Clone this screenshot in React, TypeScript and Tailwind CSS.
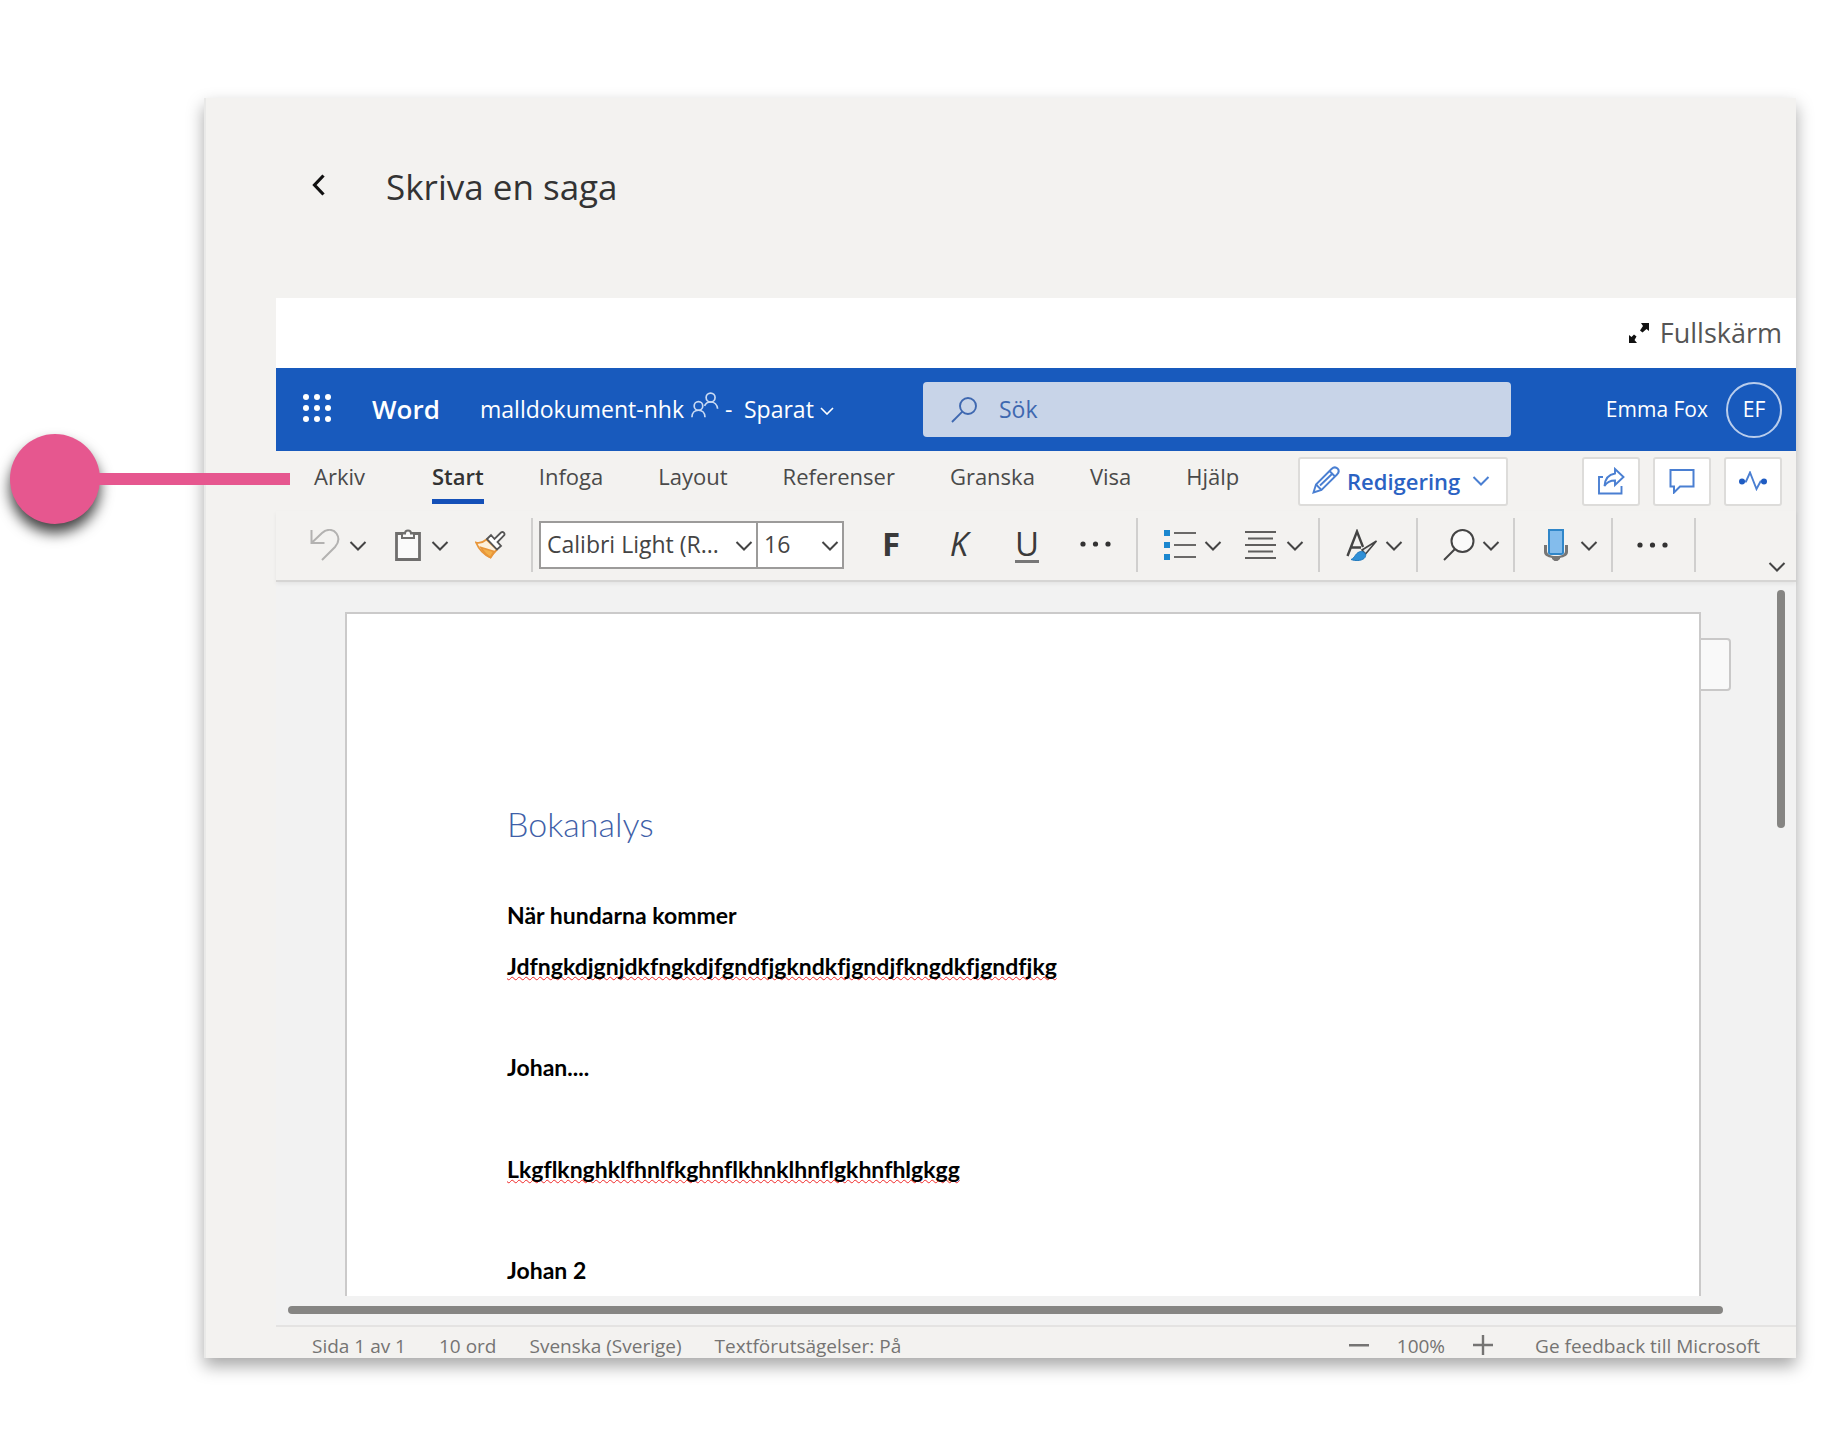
import { useState } from 'react'
import type { ReactNode } from 'react'

const tabs = ['Arkiv', 'Start', 'Infoga', 'Layout', 'Referenser', 'Granska', 'Visa', 'Hjälp']

function Chevron({ className = '' }: { className?: string }) {
  return (
    <svg className={`w-[18px] h-[10px] shrink-0 ${className}`} viewBox="0 0 18 10" fill="none" stroke="currentColor" strokeWidth="2">
      <path d="M1.500 1L9 8.500L16.500 1" />
    </svg>
  )
}

function Dots() {
  return (
    <svg className="w-[31px] h-[6px]" viewBox="0 0 31 6" fill="#333333">
      <circle cx="3" cy="3" r="2.600" />
      <circle cx="15.500" cy="3" r="2.600" />
      <circle cx="28" cy="3" r="2.600" />
    </svg>
  )
}

function Separator() {
  return <div className="w-[2px] h-[54px] bg-[#d0cfce] shrink-0" />
}

function ToolButton({ label, menu, className = '', children }: { label: string; menu?: boolean; className?: string; children: ReactNode }) {
  return (
    <button aria-label={label} className={`flex items-center shrink-0 text-[#444444] ${className}`}>
      {children}
      {menu && <Chevron className="mt-[2px]" />}
    </button>
  )
}

function TopButton({ label, children }: { label: string; children: ReactNode }) {
  return (
    <button
      aria-label={label}
      className="w-[58px] h-[49px] flex items-center justify-center bg-white border-2 border-[#dddcda] rounded-[3px] text-[#4a7fd2]"
    >
      {children}
    </button>
  )
}

function WordHeader() {
  return (
    <header className="flex items-center h-[83px] bg-[#185abd] text-white">
      <div className="flex items-center w-[647px] shrink-0 pl-[27px]">
        <button aria-label="Startprogram för appar" className="mb-1">
          <svg className="w-[28px] h-[28px]" viewBox="0 0 28 28" fill="currentColor">
            {[3, 14, 25].map((y) => [3, 14, 25].map((x) => <circle key={`${x}-${y}`} cx={x} cy={y} r="3" />))}
          </svg>
        </button>
        <span className="ml-[41px] w-[108px] text-[26px] font-semibold">Word</span>
        <span className="w-[211px] text-[23px] whitespace-nowrap">malldokument-nhk</span>
        <svg className="w-[28px] h-[28px] mb-[10px]" viewBox="0 0 30 28" fill="none" stroke="#c9daf3" strokeWidth="1.800">
          <circle cx="8" cy="15" r="4.600" />
          <path d="M1 27c0-4.500 3-7.400 7-7.400s7 2.900 7 7.400" />
          <circle cx="21" cy="6" r="4.800" />
          <path d="M14.500 15c1.200-2.700 3.600-4.200 6.500-4.200c4 0 7 3 7.500 7.200" />
        </svg>
        <button className="flex items-center ml-[6px] text-[23px]">
          <span className="w-[19px] text-left">-</span>
          Sparat
          <svg className="w-[14px] h-[8px] ml-[6px] mt-[2px]" viewBox="0 0 14 8" fill="none" stroke="currentColor" strokeWidth="1.600">
            <path d="M1 1L7 7L13 1" />
          </svg>
        </button>
      </div>
      <label className="flex items-center flex-1 min-w-0 h-[55px] pl-7 bg-[#c8d4e8] rounded-[4px] text-[#3f68b0]">
        <svg className="w-[26px] h-[26px] shrink-0" viewBox="0 0 26 26" fill="none" stroke="currentColor" strokeWidth="1.900">
          <circle cx="17" cy="9" r="8" />
          <path d="M11.300 14.700L1 25" />
        </svg>
        <input
          type="text"
          aria-label="Sök"
          placeholder="Sök"
          className="flex-1 min-w-0 ml-[22px] bg-transparent text-[23px] outline-none placeholder:text-[#3f68b0]"
        />
      </label>
      <div className="flex items-center justify-end gap-[18px] w-[285px] shrink-0 pr-[14px]">
        <span className="text-[21px]">Emma Fox</span>
        <button className="w-[56px] h-[56px] rounded-full border-2 border-[#b9cdec] text-[21px]">EF</button>
      </div>
    </header>
  )
}

function Tabs() {
  const [active, setActive] = useState('Start')

  return (
    <div className="flex items-center h-[60px] pl-[38px] pr-[14px]">
      <nav className="flex items-start gap-[55px] h-[50px]">
        {tabs.map((tab) => (
          <button
            key={tab}
            onClick={() => setActive(tab)}
            className={`pb-[3px] leading-[40px] h-[48px] text-[22px] first:mr-3 border-b-[5px] ${
              tab === active ? 'font-semibold text-[#333333] border-[#1450b8]' : 'text-[#4a4a4a] border-transparent'
            }`}
          >
            {tab}
          </button>
        ))}
      </nav>
      <button className="flex items-center w-[210px] h-[49px] ml-auto mr-[74px] pl-3 bg-white border-2 border-[#dddcda] rounded-[3px] text-[22px] font-semibold text-[#2b62c3]">
        <svg className="w-[28px] h-[28px] mr-[7px] mb-[2px]" viewBox="0 0 28 28" fill="none" stroke="#4a7fd2" strokeWidth="1.900">
          <path d="M1.500 26.500L4 18.500L19.500 3C21.500 1 24 1 25.500 2.500C27 4 27 6.500 25 8.500L9.500 24Z" />
          <path d="M4 18.500L9.500 24M17.500 5L23 10.500M8 19.500L20.500 7.500" />
        </svg>
        Redigering
        <Chevron className="ml-3 text-[#4a7fd2]" />
      </button>
      <div className="flex gap-[13px]">
        <TopButton label="Dela">
          <svg className="w-[28px] h-[28px]" viewBox="0 0 28 28" fill="none" stroke="currentColor" strokeWidth="1.900">
            <path d="M6 10H2V26.500H24.500V19" />
            <path d="M18 2L26.500 10L18 18V13.500C13 13.500 10 15 7.500 19C8 12 11.500 7.500 18 6.500Z" />
          </svg>
        </TopButton>
        <TopButton label="Kommentarer">
          <svg className="w-[26px] h-[26px]" viewBox="0 0 26 26" fill="none" stroke="currentColor" strokeWidth="2">
            <path d="M1.500 2H24.500V18.500H11L5 24.500V18.500H1.500Z" />
          </svg>
        </TopButton>
        <TopButton label="Aktivitet">
          <svg className="w-[28px] h-[20px]" viewBox="0 0 28 20" fill="none" stroke="currentColor" strokeWidth="1.900">
            <path d="M3 10.500H7L11 1.500L17.500 18L21.500 10.500H25" />
            <circle cx="3" cy="10.500" r="3" fill="#1f5cc2" stroke="none" />
            <circle cx="25" cy="10.500" r="3" fill="#1f5cc2" stroke="none" />
          </svg>
        </TopButton>
      </div>
    </div>
  )
}

function Toolbar() {
  return (
    <div className="relative z-10 flex items-center h-[71px] pb-[2px] pl-[34px] pr-[10px] border-b-2 border-[#d6d5d4] shadow-[0_2px_4px_rgba(0,0,0,0.06)]">
      <ToolButton label="Ångra" menu className="gap-[9px] mr-7">
        <svg className="w-[30px] h-[32px]" viewBox="0 0 30 32" fill="none" stroke="#b3b2b1" strokeWidth="2">
          <path d="M1.500 1V14H14.500M1.500 14L12 4C17 -0.500 23.500 0 26.500 4.500C29.500 9 28.500 14 25 18L12 31" />
        </svg>
      </ToolButton>
      <ToolButton label="Klistra in" menu className="gap-[10px] mr-[26px]">
        <svg className="w-[26px] h-[32px]" viewBox="0 0 26 32" fill="#fafafa" stroke="#6f6e6d" strokeWidth="2.800">
          <path d="M1.500 4.500H24.500V30.500H1.500Z" />
          <path d="M7 9V4.500H10C10 0.500 16 0.500 16 4.500H19V9Z" strokeWidth="2" />
        </svg>
      </ToolButton>
      <ToolButton label="Hämta format" className="mr-[25px]">
        <svg className="w-[31px] h-[28px]" viewBox="0 0 31 28" fill="none" strokeWidth="1.800">
          <path d="M1 11.500C5 12.500 8 11.500 11.500 8.500L22 18.500C20 20.500 17.500 23.500 15.500 26.500C9 24 4 18.500 1 11.500Z" fill="#fdf0dc" stroke="#e8963a" />
          <path d="M6 16.500L19 20.500L15.500 26.500C11.500 24.500 8.500 21.500 6 16.500Z" fill="#f3b04a" stroke="#e8963a" />
          <path d="M12 8L16 4L19.500 8L26 1.500C28 0 30.500 2.500 29 4.500L22.500 11L26 15L22 18.500Z" fill="#ffffff" stroke="#555555" />
        </svg>
      </ToolButton>
      <Separator />
      <div className="relative ml-[6px] shrink-0 text-[#444444]">
        <select aria-label="Teckensnitt" className="appearance-none w-[219px] h-[48px] pl-[6px] bg-white border-2 border-[#9c9b9a] text-[23px]">
          <option>Calibri Light (R...</option>
        </select>
        <Chevron className="absolute right-[5px] top-[20px] pointer-events-none" />
      </div>
      <div className="relative -ml-[2px] shrink-0 text-[#444444]">
        <select aria-label="Teckenstorlek" className="appearance-none w-[88px] h-[48px] pl-[6px] bg-white border-2 border-[#9c9b9a] text-[23px]">
          <option>16</option>
        </select>
        <Chevron className="absolute right-[5px] top-[20px] pointer-events-none" />
      </div>
      <div className="flex items-center ml-[13px] mr-[7px] mb-[2px] text-[33px] text-[#3a3a3a]">
        <button aria-label="Fet" className="w-[68px] font-bold">F</button>
        <button aria-label="Kursiv" className="w-[68px] italic">K</button>
        <button aria-label="Understruken" className="w-[68px]">
          <span className="inline-block w-[24px] h-[36px] leading-[34px] border-b-[3px] border-[#777777]">U</span>
        </button>
        <button aria-label="Fler teckenalternativ" className="w-[68px] flex justify-center">
          <Dots />
        </button>
      </div>
      <Separator />
      <ToolButton label="Punktlista" menu className="gap-2 ml-[26px] mr-[23px]">
        <svg className="w-[32px] h-[30px]" viewBox="0 0 32 30">
          <path d="M0 0H6V6H0ZM0 12H6V18H0ZM0 24H6V30H0Z" fill="#1b87cf" />
          <path d="M10 3H32M10 15H32M10 27H32" stroke="#6a6968" strokeWidth="2.200" />
        </svg>
      </ToolButton>
      <ToolButton label="Justering" menu className="gap-[10px] mr-[14px]">
        <svg className="w-[31px] h-[30px]" viewBox="0 0 31 30" stroke="#5f5e5d" strokeWidth="2">
          <path d="M0 2H31M3 8.500H28M0 15H31M3 21.500H28M0 28H31" />
        </svg>
      </ToolButton>
      <Separator />
      <ToolButton label="Format" menu className="gap-[7px] ml-[26px] mr-[13px]">
        <svg className="w-[32px] h-[32px]" viewBox="0 0 32 32" fill="none" stroke="#444444" strokeWidth="2.400">
          <path d="M1.500 27L11 2.500L17 18M5.500 18.500H15" />
          <path d="M30.500 12L16 21L19.500 25L30.500 12Z" fill="#e8e8e8" strokeWidth="1.600" />
          <path d="M5 30.500C9 29.500 9.500 22.500 15.500 22.500C20 23 21 27 18 29.500C15 32 9 32 5 30.500Z" fill="#2f8fd6" stroke="#1f78bd" strokeWidth="1" />
        </svg>
      </ToolButton>
      <Separator />
      <ToolButton label="Sök efter" menu className="gap-[7px] ml-[25px] mr-[13px]">
        <svg className="w-[32px] h-[32px]" viewBox="0 0 32 32" fill="none" stroke="currentColor" strokeWidth="2">
          <circle cx="19.500" cy="12" r="11" fill="#fafafa" />
          <path d="M12 20L1 31" />
        </svg>
      </ToolButton>
      <Separator />
      <ToolButton label="Diktera" menu className="gap-[12px] ml-[29px] mr-[13px]">
        <svg className="w-[24px] h-[32px]" viewBox="0 0 24 32">
          <path d="M0 16H3V22C3 25 6 27 12 27S21 25 21 22V16H24V23C24 26.500 20.500 28 16 29V30L13.500 32H10.500L8 30V29C3.500 28 0 26.500 0 23Z" fill="#777675" />
          <path d="M5 1H19V23.500C19 24.500 18 25 17 25H7C6 25 5 24.500 5 23.500Z" fill="#83bcec" stroke="#2f86c9" strokeWidth="2" />
        </svg>
      </ToolButton>
      <Separator />
      <ToolButton label="Fler alternativ" className="ml-6 mr-[26px]">
        <Dots />
      </ToolButton>
      <Separator />
      <ToolButton label="Menyfliksområdets layout" menu className="self-end ml-auto mb-[6px]">
        {null}
      </ToolButton>
    </div>
  )
}

function Misspelled({ children }: { children: ReactNode }) {
  return (
    <span className="underline decoration-wavy decoration-[#f02828] decoration-1 underline-offset-1 [text-decoration-skip-ink:none]">
      {children}
    </span>
  )
}

function Document() {
  return (
    <div className="flex bg-[#f2f2f2] pl-[69px] pt-[30px] pr-[11px]">
      <article className="flex-1 min-w-0 h-[684px] pl-[160px] pt-[184px] bg-white border-2 border-b-0 border-[#cbcaca] font-['Lato','Carlito',sans-serif] text-[23px] leading-[51px] font-bold text-black [font-variant-ligatures:none]">
        <h1 className="mb-[41px] text-[34px] font-light text-[#3f5fa8]">Bokanalys</h1>
        <p>När hundarna kommer</p>
        <p className="mb-[50px]">
          <Misspelled>Jdfngkdjgnjdkfngkdjfgndfjgkndkfjgndjfkngdkfjgndfjkg</Misspelled>
        </p>
        <p className="mb-[51px]">Johan....</p>
        <p className="mb-[50px]">
          <Misspelled>Lkgflknghklfhnlfkghnflkhnklhnflgkhnfhlgkgg</Misspelled>
        </p>
        <p>Johan 2</p>
      </article>
      <div className="w-[30px] h-[53px] mt-[26px] bg-[#f9f9f9] border-2 border-l-0 border-[#c9c8c8] rounded-r-[4px]" />
      <div className="w-[8px] h-[238px] ml-[46px] -mt-[22px] bg-[#868583] rounded-full" />
    </div>
  )
}

function StatusBar() {
  return (
    <footer className="flex items-start pt-[7px] pl-9 pr-9 border-t-2 border-[#e4e3e2] text-[19px] leading-[24px] text-[#757473] whitespace-nowrap">
      <div className="flex gap-[33px]">
        <span>Sida 1 av 1</span>
        <span>10 ord</span>
        <button>Svenska (Sverige)</button>
        <button>Textförutsägelser: På</button>
      </div>
      <div className="flex items-start ml-auto">
        <button aria-label="Zooma ut" className="mt-[10px]">
          <svg className="w-[20px] h-[3px]" viewBox="0 0 20 3" fill="#757473">
            <path d="M0 0H20V2.500H0Z" />
          </svg>
        </button>
        <span className="mx-7">100%</span>
        <button aria-label="Zooma in" className="mt-[1px]">
          <svg className="w-[20px] h-[20px]" viewBox="0 0 20 20" stroke="#757473" strokeWidth="2.400">
            <path d="M0 10H20M10 0V20" />
          </svg>
        </button>
        <a href="#feedback" className="ml-[42px]">Ge feedback till Microsoft</a>
      </div>
    </footer>
  )
}

export default function App() {
  return (
    <div className="relative min-h-screen bg-white pt-[98px] pb-[74px] pl-[204px] pr-[52px] font-['Open_Sans','Noto_Sans',sans-serif]">
      <main className="flex flex-col pl-[70px] bg-[#f3f2f0] border-l-2 border-[#e9e9e8] shadow-[0_8px_16px_rgba(0,0,0,0.35)]">
        <div className="flex items-center h-[200px] pl-9 pb-[22px]">
          <button aria-label="Tillbaka" className="mb-1">
            <svg className="w-[13px] h-[22px]" viewBox="0 0 13 22" fill="none" stroke="#111111" strokeWidth="3.200">
              <path d="M11.500 1.500L2.500 11L11.500 20.500" />
            </svg>
          </button>
          <h2 className="ml-[61px] text-[35px] font-medium text-[#333333]">Skriva en saga</h2>
        </div>
        <div className="flex items-center justify-end h-[70px] pr-[14px] bg-white">
          <button className="flex items-center gap-[11px] text-[27px] text-[#555555]">
            <svg className="w-[20px] h-[20px]" viewBox="0 0 20 20" fill="#111111">
              <path d="M12 0H20V8L17.500 6L13.500 9.500L11 7.500L14 3Z" />
              <path d="M8 20H0V12L2.500 14L5 11.500L7.500 13.500L5.500 17Z" />
            </svg>
            Fullskärm
          </button>
        </div>
        <WordHeader />
        <Tabs />
        <Toolbar />
        <Document />
        <div className="h-[29px] pt-[10px] pl-3 pr-[73px] bg-[#f2f2f2]">
          <div className="h-[8px] rounded-full bg-[#868583]" />
        </div>
        <StatusBar />
      </main>

      {/* Callout pointing at the ribbon tabs */}
      <div className="absolute left-[10px] top-[434px] flex items-center">
        <div className="w-[90px] h-[90px] rounded-full bg-[#e6578f] shadow-[0_9px_14px_rgba(0,0,0,0.75)]" />
        <div className="w-[192px] h-[12px] -ml-[2px] bg-[#e6578f]" />
      </div>
    </div>
  )
}
